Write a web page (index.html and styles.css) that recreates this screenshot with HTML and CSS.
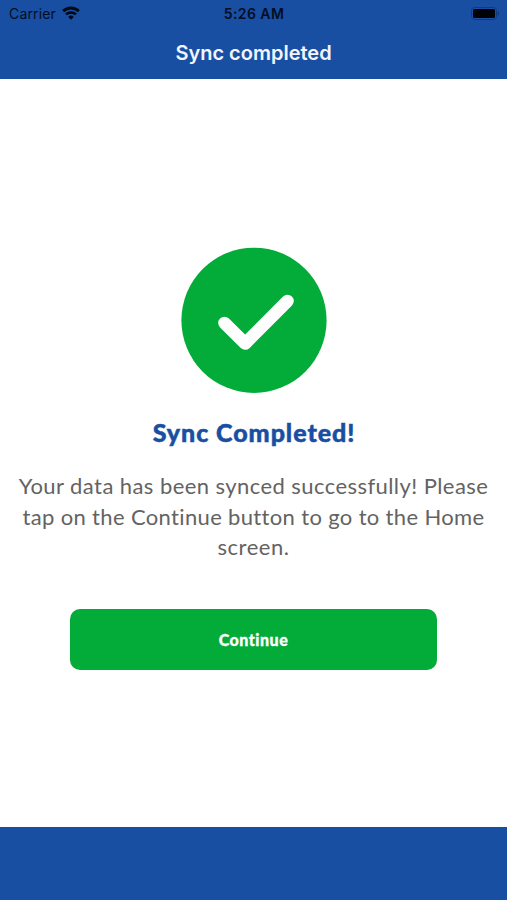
FILE: index.html
```html
<!DOCTYPE html>
<html lang="en">
<head>
  <meta charset="utf-8"/>
  <title>Sync completed</title>
  <link rel="stylesheet" href="styles.css">
</head>
<body>

<header class="header">
  <div class="status-bar">
    <div class="carrier">
      <span class="carrier-name">Carrier</span>
      <svg class="wifi" viewBox="0 0 18 14" width="18" height="14">
        <path d="M1.2 5.1a11.2 11.2 0 0 1 15.6 0" fill="none" stroke="#020815" stroke-width="2.9"/>
        <path d="M4 8.4a7.2 7.2 0 0 1 10 0" fill="none" stroke="#020815" stroke-width="2.5"/>
        <path d="M6.2 10.9a4.1 4.1 0 0 1 5.6 0L9 13.7z" fill="#020815"/>
      </svg>
    </div>
    <span class="time">5:26 AM</span>
    <svg class="battery" viewBox="0 0 28 13" width="28" height="13">
      <rect x="0.5" y="0.5" width="25" height="12" rx="3" fill="none" stroke="#103c7f"/>
      <rect x="2" y="2" width="22" height="9" rx="1.5" fill="#000208"/>
      <path d="M26.6 4.5v4a2 2 0 0 0 0-4z" fill="#103c7f"/>
    </svg>
  </div>
  <h1 class="title">Sync completed</h1>
</header>

<main class="content">
  <svg class="check" viewBox="0 0 146 146" width="146" height="146">
    <circle cx="73" cy="73.3" r="72.6" fill="#03ab39"/>
    <path d="M43.5 76L64.2 96.5L106.5 54" fill="none" stroke="#fff" stroke-width="12.6" stroke-linecap="round" stroke-linejoin="round"/>
  </svg>
  <h2 class="heading">Sync Completed!</h2>
  <p class="message">
    <span class="line">Your data has been synced successfully! Please</span>
    <span class="line line-middle">tap on the Continue button to go to the Home</span>
    <span class="line line-last">screen.</span>
  </p>
  <button class="continue" type="button">Continue</button>
</main>

<footer class="footer"></footer>

</body>
</html>
```

FILE: styles.css
```css
* {
  box-sizing: border-box;
}
body {
  margin: 0;
  height: 900px;
  display: flex;
  flex-direction: column;
  overflow: hidden;
  background: #fff;
  font-family: Lato, sans-serif;
}
.header {
  height: 79px;
  background: #184fa3;
  font-family: Inter, sans-serif;
}
.status-bar {
  display: grid;
  grid-template-columns: 1fr auto 1fr;
  align-items: center;
  height: 27px;
  padding: 0 8px 0 9px;
  color: #020d24;
}
.carrier {
  display: flex;
  align-items: center;
  gap: 6px;
}
.carrier-name {
  font-size: 14px;
  line-height: 27px;
  letter-spacing: 0.15px;
}
.wifi {
  margin-bottom: 2px;
}
.time {
  font-size: 14px;
  font-weight: 600;
  letter-spacing: 0.45px;
}
.battery {
  justify-self: end;
}
.title {
  margin: 0;
  color: #f1f5fc;
  font-size: 20px;
  font-weight: 600;
  line-height: 52px;
  text-align: center;
}
.content {
  flex: 1;
  display: flex;
  flex-direction: column;
  align-items: center;
  padding-top: 168px;
}
.check {
  flex: none;
}
.heading {
  margin: 23px 0 0;
  color: #184fa3;
  font-size: 25px;
  font-weight: 900;
  line-height: 32px;
  letter-spacing: 0.95px;
  text-indent: 1px;
  -webkit-text-stroke: 0.5px #184fa3;
}
.message {
  margin: 22px 0 0;
  color: #636363;
  font-size: 22px;
  line-height: 31px;
  letter-spacing: 0.43px;
  text-align: center;
}
.line {
  display: block;
  white-space: nowrap;
}
.line-middle {
  letter-spacing: 0.35px;
}
.line-last {
  line-height: 30px;
  letter-spacing: 0.5px;
}
.continue {
  width: 367px;
  height: 61px;
  margin-top: 47px;
  border: none;
  border-radius: 10px;
  background: #03ab39;
  color: #fff;
  font-family: Lato, sans-serif;
  font-size: 16px;
  font-weight: 900;
  letter-spacing: 0.5px;
  -webkit-text-stroke: 0.3px #fff;
}
.footer {
  height: 73px;
  background: #184fa3;
}
```
